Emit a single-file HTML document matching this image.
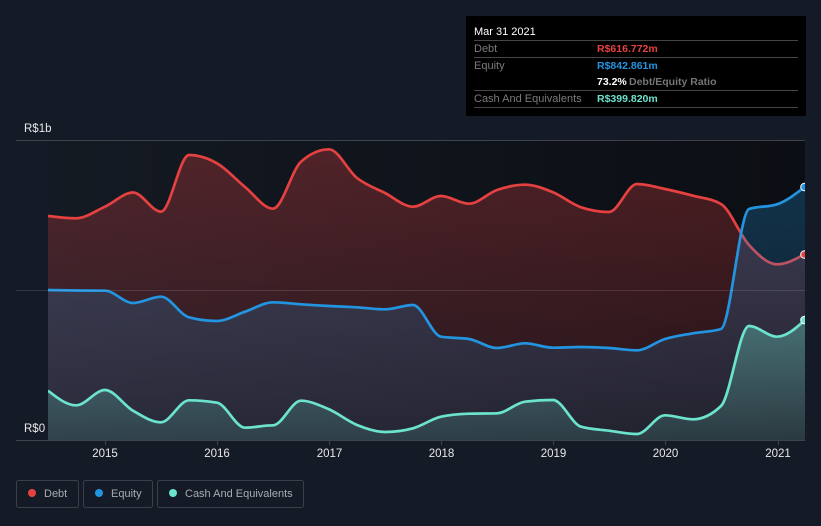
<!DOCTYPE html>
<html><head><meta charset="utf-8"><style>
html,body{margin:0;padding:0;background:#151b26}
svg{display:block}
text{font-family:"Liberation Sans",sans-serif}
</style></head><body>
<svg width="821" height="526" viewBox="0 0 821 526" xmlns="http://www.w3.org/2000/svg">
<defs>
<linearGradient id="bg" x1="0" y1="0" x2="1" y2="0"><stop offset="0" stop-color="#141a23"/><stop offset="1" stop-color="#0b0e13"/></linearGradient>
<linearGradient id="r" gradientUnits="userSpaceOnUse" x1="0" y1="141" x2="0" y2="440"><stop offset="0" stop-color="#e64141" stop-opacity=".3"/><stop offset="1" stop-color="#e64141" stop-opacity=".1"/></linearGradient>
<linearGradient id="b" gradientUnits="userSpaceOnUse" x1="0" y1="141" x2="0" y2="440"><stop offset="0" stop-color="#2394df" stop-opacity=".3"/><stop offset="1" stop-color="#2394df" stop-opacity=".1"/></linearGradient>
<linearGradient id="t" gradientUnits="userSpaceOnUse" x1="0" y1="320" x2="0" y2="440"><stop offset="0" stop-color="#6ce3cc" stop-opacity=".36"/><stop offset="1" stop-color="#6ce3cc" stop-opacity=".13"/></linearGradient>
<clipPath id="c"><rect x="48" y="130" width="757" height="311"/></clipPath>
<path id="dl" d="M48 216C57.3 217.15 66.7 218.3 76 218.3C85.7 218.3 95.3 211 105 206.7C114.3 202.4 123.7 192.5 133 192.5C142.3 192.5 151.7 211.7 161 211.7C170.3 211.7 179.7 155 189 155C198.3 155 207.7 158 217 163.3C226.3 168.6 235.7 179.4 245 187C254.3 194.6 263.7 208.7 273 208.7C282.3 208.7 291.7 170 301 161.7C310.3 153.4 319.7 149.3 329 149.3C338.3 149.3 347.7 170.7 357 178C366.3 185.3 375.7 188.2 385 193C394.3 197.8 403.7 206.7 413 206.7C422.3 206.7 431.7 196 441 196C450.3 196 459.7 203.7 469 203.7C478.3 203.7 487.7 193.2 497 190C506.3 186.8 515.7 184.7 525 184.7C534.3 184.7 543.7 188.5 553 192.3C562.3 196.1 571.7 204.2 581 207.3C590.3 210.4 599.7 212 609 212C618.3 212 627.7 184 637 184C646.3 184 655.7 187.1 665 189C674.3 191 683.7 193.2 693 195.7C702.3 198.2 711.7 198.5 721 204C730.3 209.5 739.7 235 749 245C758.3 255 767.7 264.3 777 264.3C786.3 264.3 795.7 259.2 805 254"/>
<path id="el" d="M48 290C57.3 290.2 66.7 290.4 76 290.5C85.7 290.6 95.3 290.6 105 290.7C114.3 290.8 123.7 303 133 303C142.3 303 151.7 296.7 161 296.7C170.3 296.7 179.7 314.8 189 317.3C198.3 319.8 207.7 321 217 321C226.3 321 235.7 314.8 245 311.7C254.3 308.6 263.7 302.3 273 302.3C282.3 302.3 291.7 303.7 301 304.3C310.3 304.9 319.7 305.5 329 306C338.3 306.5 347.7 306.8 357 307.3C366.3 307.9 375.7 309.3 385 309.3C394.3 309.3 403.7 305 413 305C422.3 305 431.7 335.2 441 336.7C450.3 338.2 459.7 337.5 469 339C478.3 340.5 487.7 348 497 348C506.3 348 515.7 343.3 525 343.3C534.3 343.3 543.7 347.7 553 347.7C562.3 347.7 571.7 347 581 347C590.3 347 599.7 347.5 609 348C618.3 348.6 627.7 350.3 637 350.3C646.3 350.3 655.7 341.8 665 339C674.3 336.2 683.7 335 693 333.3C702.3 331.6 711.7 331.9 721 329C730.3 326.1 739.7 212.1 749 209C758.3 205.9 767.7 207.4 777 204.3C786.3 201.2 795.7 193.9 805 186.7"/>
<path id="cl" d="M48 390.7C57.3 398 66.7 405.3 76 405.3C85.7 405.3 95.3 390 105 390C114.3 390 123.7 405.3 133 410.7C142.3 416.1 151.7 422.3 161 422.3C170.3 422.3 179.7 400.3 189 400.3C198.3 400.3 207.7 401.1 217 402.7C226.3 404.3 235.7 427.7 245 427.7C254.3 427.7 263.7 425.3 273 425.3C282.3 425.3 291.7 400.7 301 400.7C310.3 400.7 319.7 405.3 329 409.3C338.3 413.4 347.7 421.2 357 425C366.3 428.8 375.7 432 385 432C394.3 432 403.7 430.8 413 428.3C422.3 425.8 431.7 418.7 441 416.7C450.3 414.7 459.7 414 469 413.7C478.3 413.4 487.7 413.6 497 413.3C506.3 413 515.7 402.8 525 401.7C534.3 400.6 543.7 400 553 400C562.3 400 571.7 424 581 426.7C590.3 429.4 599.7 429.5 609 430.7C618.3 431.9 627.7 434 637 434C646.3 434 655.7 415.3 665 415.3C674.3 415.3 683.7 419.3 693 419.3C702.3 419.3 711.7 414.9 721 406C730.3 397.1 739.7 326 749 326C758.3 326 767.7 336.7 777 336.7C786.3 336.7 795.7 328.4 805 320"/>
</defs>
<rect width="821" height="526" fill="#151b26"/>
<rect x="48" y="141" width="757" height="299" fill="url(#bg)"/>
<g clip-path="url(#c)">
<path fill="url(#r)" d="M48 216C57.3 217.15 66.7 218.3 76 218.3C85.7 218.3 95.3 211 105 206.7C114.3 202.4 123.7 192.5 133 192.5C142.3 192.5 151.7 211.7 161 211.7C170.3 211.7 179.7 155 189 155C198.3 155 207.7 158 217 163.3C226.3 168.6 235.7 179.4 245 187C254.3 194.6 263.7 208.7 273 208.7C282.3 208.7 291.7 170 301 161.7C310.3 153.4 319.7 149.3 329 149.3C338.3 149.3 347.7 170.7 357 178C366.3 185.3 375.7 188.2 385 193C394.3 197.8 403.7 206.7 413 206.7C422.3 206.7 431.7 196 441 196C450.3 196 459.7 203.7 469 203.7C478.3 203.7 487.7 193.2 497 190C506.3 186.8 515.7 184.7 525 184.7C534.3 184.7 543.7 188.5 553 192.3C562.3 196.1 571.7 204.2 581 207.3C590.3 210.4 599.7 212 609 212C618.3 212 627.7 184 637 184C646.3 184 655.7 187.1 665 189C674.3 191 683.7 193.2 693 195.7C702.3 198.2 711.7 198.5 721 204C730.3 209.5 739.7 235 749 245C758.3 255 767.7 264.3 777 264.3C786.3 264.3 795.7 259.2 805 254V440H48Z"/>
<use href="#dl" fill="none" stroke="#e64141" stroke-width="2.7"/>
<path fill="url(#b)" d="M48 290C57.3 290.2 66.7 290.4 76 290.5C85.7 290.6 95.3 290.6 105 290.7C114.3 290.8 123.7 303 133 303C142.3 303 151.7 296.7 161 296.7C170.3 296.7 179.7 314.8 189 317.3C198.3 319.8 207.7 321 217 321C226.3 321 235.7 314.8 245 311.7C254.3 308.6 263.7 302.3 273 302.3C282.3 302.3 291.7 303.7 301 304.3C310.3 304.9 319.7 305.5 329 306C338.3 306.5 347.7 306.8 357 307.3C366.3 307.9 375.7 309.3 385 309.3C394.3 309.3 403.7 305 413 305C422.3 305 431.7 335.2 441 336.7C450.3 338.2 459.7 337.5 469 339C478.3 340.5 487.7 348 497 348C506.3 348 515.7 343.3 525 343.3C534.3 343.3 543.7 347.7 553 347.7C562.3 347.7 571.7 347 581 347C590.3 347 599.7 347.5 609 348C618.3 348.6 627.7 350.3 637 350.3C646.3 350.3 655.7 341.8 665 339C674.3 336.2 683.7 335 693 333.3C702.3 331.6 711.7 331.9 721 329C730.3 326.1 739.7 212.1 749 209C758.3 205.9 767.7 207.4 777 204.3C786.3 201.2 795.7 193.9 805 186.7V440H48Z"/>
<use href="#el" fill="none" stroke="#2394df" stroke-width="2.7"/>
<path fill="url(#t)" d="M48 390.7C57.3 398 66.7 405.3 76 405.3C85.7 405.3 95.3 390 105 390C114.3 390 123.7 405.3 133 410.7C142.3 416.1 151.7 422.3 161 422.3C170.3 422.3 179.7 400.3 189 400.3C198.3 400.3 207.7 401.1 217 402.7C226.3 404.3 235.7 427.7 245 427.7C254.3 427.7 263.7 425.3 273 425.3C282.3 425.3 291.7 400.7 301 400.7C310.3 400.7 319.7 405.3 329 409.3C338.3 413.4 347.7 421.2 357 425C366.3 428.8 375.7 432 385 432C394.3 432 403.7 430.8 413 428.3C422.3 425.8 431.7 418.7 441 416.7C450.3 414.7 459.7 414 469 413.7C478.3 413.4 487.7 413.6 497 413.3C506.3 413 515.7 402.8 525 401.7C534.3 400.6 543.7 400 553 400C562.3 400 571.7 424 581 426.7C590.3 429.4 599.7 429.5 609 430.7C618.3 431.9 627.7 434 637 434C646.3 434 655.7 415.3 665 415.3C674.3 415.3 683.7 419.3 693 419.3C702.3 419.3 711.7 414.9 721 406C730.3 397.1 739.7 326 749 326C758.3 326 767.7 336.7 777 336.7C786.3 336.7 795.7 328.4 805 320V440H48Z"/>
<use href="#cl" fill="none" stroke="#6ce3cc" stroke-width="2.7"/>
<circle cx="804.5" cy="187" r="3.8" fill="#2394df" stroke="#fff" stroke-width="1"/>
<circle cx="804.5" cy="254.5" r="3.8" fill="#e64141" stroke="#fff" stroke-width="1"/>
<circle cx="804.5" cy="320" r="3.8" fill="#6ce3cc" stroke="#fff" stroke-width="1"/>
</g>
<rect x="16" y="140" width="789" height="1" fill="#3f424a"/>
<rect x="16" y="290" width="789" height="1" fill="#fff" fill-opacity=".12"/>
<rect x="16" y="440" width="789" height="1" fill="#3f424a"/>
<g fill="#3f424a"><rect x="105" y="440" width="1" height="5"/><rect x="217" y="440" width="1" height="5"/><rect x="329" y="440" width="1" height="5"/><rect x="441" y="440" width="1" height="5"/><rect x="553" y="440" width="1" height="5"/><rect x="665" y="440" width="1" height="5"/><rect x="778" y="440" width="1" height="5"/></g>
<g font-size="11.5" fill="#e8e8e8">
<text x="24" y="132">R$1b</text><text x="24" y="432">R$0</text>
<g text-anchor="middle"><text x="105" y="457">2015</text><text x="217" y="457">2016</text><text x="329.5" y="457">2017</text><text x="441.5" y="457">2018</text><text x="553.5" y="457">2019</text><text x="665.5" y="457">2020</text><text x="778" y="457">2021</text></g>
</g>
<rect x="466" y="16" width="340" height="100" fill="#000"/>
<g fill="#454545"><rect x="474" y="40" width="324" height="1"/><rect x="474" y="57" width="324" height="1"/><rect x="474" y="90" width="324" height="1"/><rect x="474" y="107" width="324" height="1"/></g>
<g font-size="11">
<text x="474" y="35" fill="#fff">Mar 31 2021</text>
<text x="474" y="52" fill="#7b7b7b">Debt</text>
<text x="474" y="69" fill="#7b7b7b">Equity</text>
<text x="474" y="102" fill="#7b7b7b">Cash And Equivalents</text>
</g>
<g font-size="10.5" font-weight="700">
<text x="597" y="52" fill="#e64141">R$616.772m</text>
<text x="597" y="69" fill="#2394df">R$842.861m</text>
<text x="597" y="85" fill="#fff">73.2%</text>
<text x="629" y="85" fill="#757575">Debt/Equity Ratio</text>
<text x="597" y="102" fill="#6ce3cc">R$399.820m</text>
</g>
<g fill="none" stroke="#3b3f49"><rect x="16.5" y="480.5" width="62" height="27" rx="2"/><rect x="83.5" y="480.5" width="69" height="27" rx="2"/><rect x="157.5" y="480.5" width="146" height="27" rx="2"/></g>
<circle cx="32" cy="493" r="4" fill="#e64141"/><circle cx="99" cy="493" r="4" fill="#2394df"/><circle cx="173" cy="493" r="4" fill="#6ce3cc"/>
<g font-size="11" fill="#a8abb1"><text x="44" y="497">Debt</text><text x="111" y="497">Equity</text><text x="185" y="497">Cash And Equivalents</text></g>
</svg>
</body></html>
